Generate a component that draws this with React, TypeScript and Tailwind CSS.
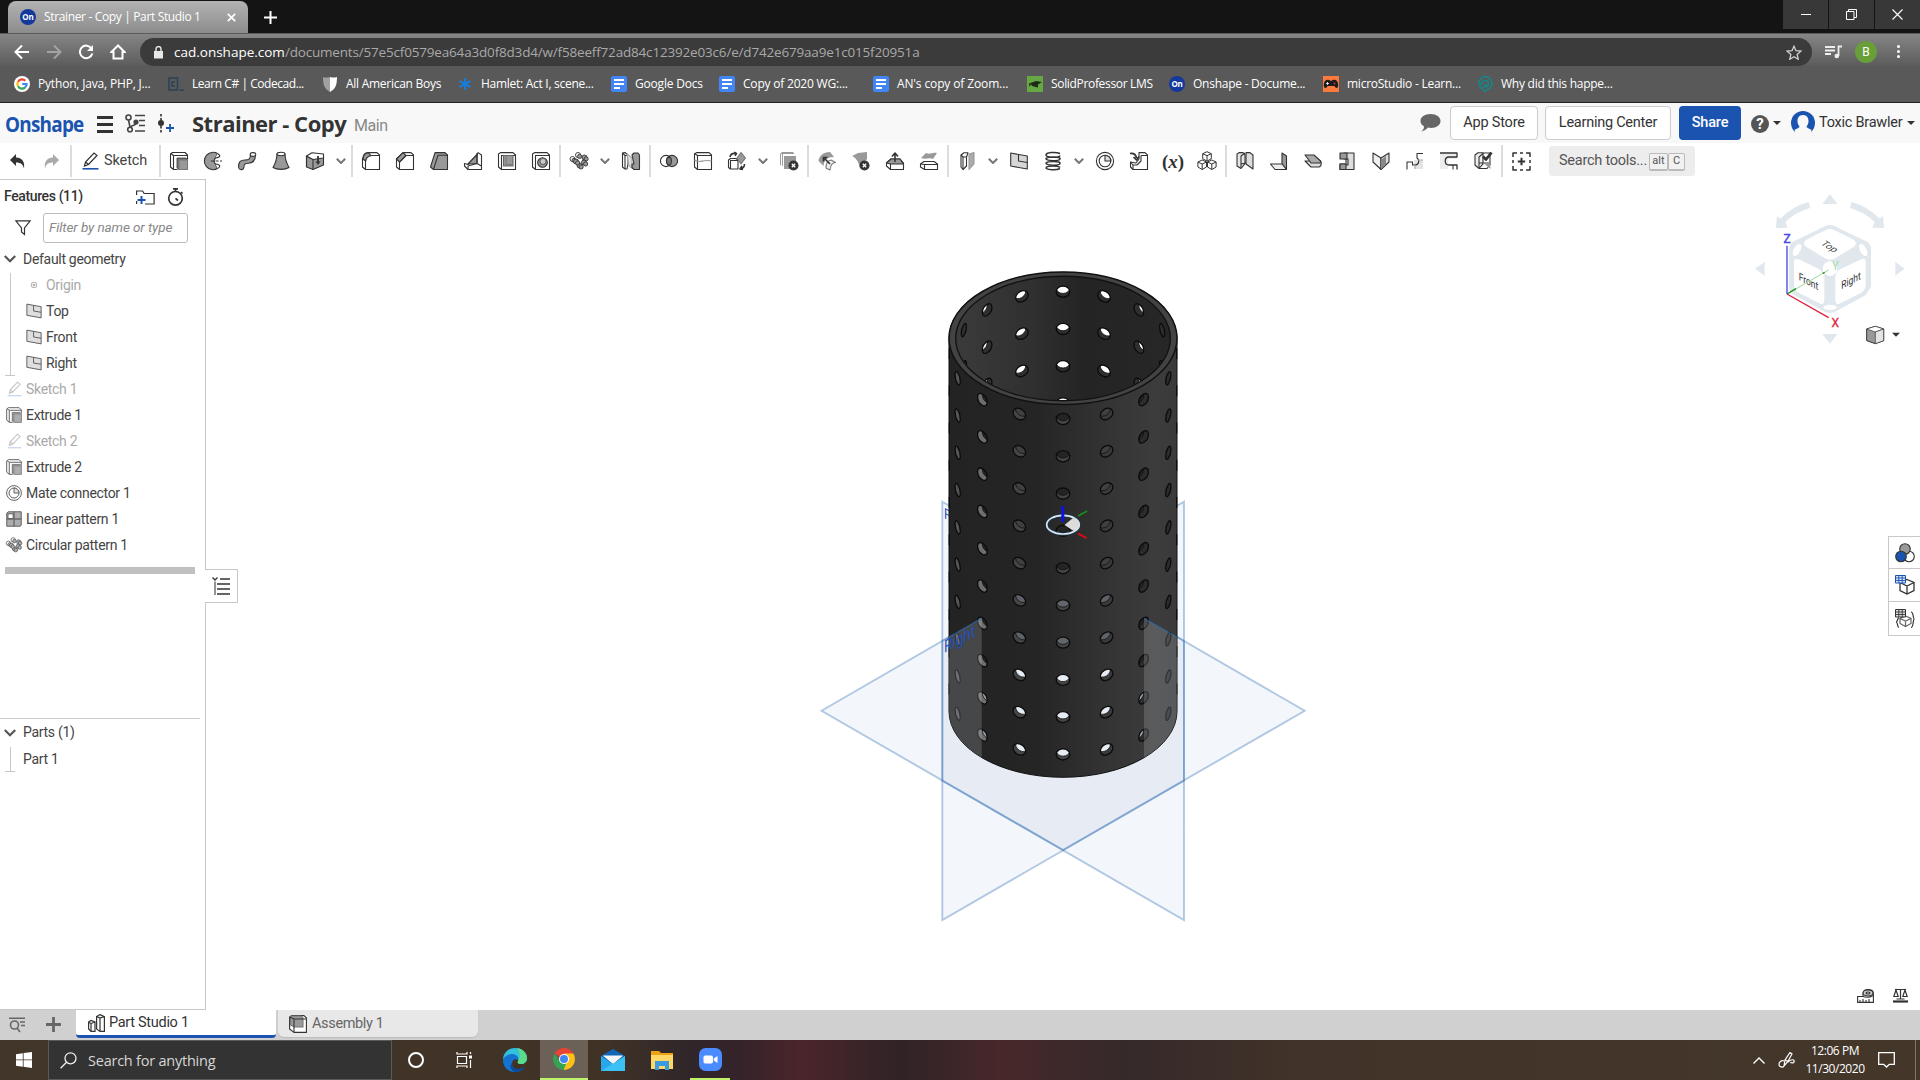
import React from "react";

type P = { children?: React.ReactNode; className?: string };

const K = "#333333";
const G = "#999999";
const L = "#dcdcdc";

/* ---------- small helpers ---------- */

function Icon({ children, size = 18, box = 18 }: { children: React.ReactNode; size?: number; box?: number }) {
  return (
    <svg width={size} height={size} viewBox={`0 0 ${box} ${box}`} fill="none" stroke={K} strokeWidth={1.1} strokeLinejoin="round" className="shrink-0 overflow-visible">
      {children}
    </svg>
  );
}

const Caret = ({ className = "" }: P) => (
  <svg width="8" height="4" viewBox="0 0 8 4" className={"shrink-0 " + className}>
    <path d="M0 0h8L4 4z" fill="#333" />
  </svg>
);

/* ---------- toolbar icons ---------- */

const ExtrudeI = () => (
  <Icon>
    <path d="M3.500 17.500.5 15V2L2.500.5H15L17.500 3v4M3.500 17.500V3.500H17.500M.8 1.500 3.500 3.500M3.500 17.500h4" fill="#fff" />
    <path d="M7 6h9l1.500 1.500v10H9L7 16z" fill="#777" strokeWidth=".8" />
    <path d="M9 8h8.500v9.500H9z" fill={G} stroke="#777" />
  </Icon>
);
const RevolveI = () => (
  <Icon>
    <path d="M13.500 1.500A8.700 8.700 0 1 0 13.500 16.500L11.500 12A4 4 0 0 1 11.500 6z" fill={G} />
    <path d="M13.500 1.500c3.500 2 3 4-2 4.500M13.500 16.500c3.500-2 3-4-2-4.500" fill="#fff" />
    <path d="M7 9h11" strokeDasharray="3 1.500" />
  </Icon>
);
const SweepI = () => (
  <Icon>
    <path d="M.6 15.500C.5 10 2 8 7 8c4 0 5.500-1 5.500-5.500h5c0 6-3 8.500-7 8.800-4 .2-4.500 1-4.700 4.500C5 18.500 1 18 .6 15.500z" fill={G} />
    <ellipse cx="15" cy="2.500" rx="2.800" ry="1.900" fill="#fff" />
  </Icon>
);
const LoftI = () => (
  <Icon>
    <path d="M5 2C5 8 3 12 1 15.500c4 2.500 12 2.500 16 0C15 12 13 8 13 2z" fill={G} />
    <ellipse cx="9" cy="2" rx="4" ry="1.700" fill="#fff" />
  </Icon>
);
const ThickenI = () => (
  <Icon>
    <path d="M.5 4 5 6.500 17.500 4v9L7 17.500.5 15z" fill={G} />
    <path d="M.5 4 6 .8 17.500 2v4L7 7.500z" fill="#fff" />
    <path d="M7 7v10.500M.5 4v11" />
    <path d="M12 4v7" strokeWidth="1.800" />
    <path d="M9.500 9.500h5L12 13z" fill={K} stroke="none" />
  </Icon>
);
const FilletI = () => (
  <Icon>
    <path d="M1 6C1 3 3 .6 6 .6h9L17.500 3v14.500H3.500L.5 15V6z" fill="#fff" />
    <path d="M3.500 17.500V10C3.500 6 6 3.500 10 3.500h7.500" />
    <path d="M1 7C1.500 3 3.500 1 6.500.8L9 3.500C6 4 4 6 3.500 9z" fill={G} />
  </Icon>
);
const ChamferI = () => (
  <Icon>
    <path d="M.5 7 7 .6h8L17.500 3v14.500H3.500L.5 15z" fill="#fff" />
    <path d="M3.500 17.500V10L10 3.500h7.500" />
    <path d="M.5 7 7 .6l3 2.900L3.500 10z" fill={G} />
  </Icon>
);
const DraftI = () => (
  <Icon>
    <path d="M.5 15 5 .6h10L17.500 3v14.500H3.500z" fill={G} />
    <path d="M3.500 17.500 8 3.200h9.500" />
  </Icon>
);
const RibI = () => (
  <Icon>
    <path d="M14 .6 17.500 3v14.500H4L.5 14V11.500L4 12.500 13 3z" fill="#fff" />
    <path d="M4 12 13 2.500v9z" fill={G} />
    <path d="M4 17.500V14l9-2.500 4.500 2.500M13 11.500V1" />
  </Icon>
);
const ShellI = () => (
  <Icon>
    <path d="M.5 2 2.500.6H15L17.500 3v14.500H3.500L.5 15z" fill="#fff" />
    <path d="M3.500 17.500V3.500h14" />
    <path d="M5.500 3.500H15V14H5.500z" fill={G} stroke="#666" />
    <path d="M8 3.500v9h7" stroke="#777" />
  </Icon>
);
const HoleI = () => (
  <Icon>
    <path d="M.5 2 2.500.6H15L17.500 3v14.500H3.500L.5 15z" fill="#fff" />
    <path d="M3.500 17.500V3.500h14" />
    <circle cx="10.500" cy="10.500" r="4.800" fill={G} />
    <circle cx="11" cy="9.500" r="3" fill="#ccc" stroke="#666" />
  </Icon>
);
const CircPatI = () => (
  <Icon>
    <g strokeWidth=".9">
      {[[2.500, 7], [8, 3], [14.500, 5.500], [14, 10.500], [9.500, 13.500], [6, 9.500]].map(([x, y], i) => (
        <g key={i}>
          <circle cx={x} cy={y} r="2.500" fill={i < 2 ? "#fff" : G} />
          <circle cx={x + 1.600} cy={y + 1.400} r="2.100" fill={G} />
        </g>
      ))}
    </g>
  </Icon>
);
const MirrorI = () => (
  <Icon>
    <path d="M.5 1 3 .5l3 2.500v9l-1 5H3L.5 15z" fill="#fff" />
    <path d="M3 17V3.500L.5 1M3 3.500h3" />
    <path d="M5 2l5 4v10l-3-2z" fill="#ddd" stroke="#aaa" />
    <path d="M10 3 12 1h4l1.500 2v14.500H12L10 15.500V12h2z" fill={G} />
  </Icon>
);
const BooleanI = () => (
  <Icon>
    <circle cx="6" cy="9" r="5.600" fill="#fff" />
    <circle cx="12" cy="9" r="5.600" fill={G} />
    <path d="M9 4.300a5.600 5.600 0 0 1 0 9.400 5.600 5.600 0 0 1 0-9.400z" fill="#777" />
  </Icon>
);
const SplitI = () => (
  <Icon>
    <path d="M.5 2 2.500.6H15L17.500 3v14.500H3.500L.5 15z" fill="#fff" />
    <path d="M3.500 17.500V3.500h14M.5 1.500l3 2" />
    <path d="M.5 8c5 4 8-1 17 1" stroke="#999" />
  </Icon>
);
const TransformI = () => (
  <Icon>
    <path d="M.5 8 2.500 6.500H8l2 1.500v9H2.500l-2-1.500z" fill="#fff" />
    <path d="M2.500 17V8.500H10" />
    <path d="M13 .5l4.500 5.500-4.500 6-4-6z" fill={G} stroke="#777" />
    <path d="M2 5C2.500 2 5 1 8 1.500M6 .3 8.500 1.500 7 3.800M16.500 12c0 3-1.500 4.500-4 5M14 14l-2 3 3 .5" strokeWidth="1.600" />
  </Icon>
);
const BadX = ({ x = 13.5, y = 13.5 }) => (
  <g>
    <circle cx={x} cy={y} r="4.500" fill={K} />
    <path d={`M${x - 1.7} ${y - 1.7}l3.400 3.400m0-3.400l-3.400 3.400`} stroke="#fff" strokeWidth="1.300" />
  </g>
);
const DeletePartI = () => (
  <Icon>
    <path d="M0 2 2 0h11l1.500 2H3v12l-3-1z" fill={G} stroke="none" />
    <path d="M4 4h12v13H4z" fill={G} stroke="none" />
    <path d="M1.500 14V2" stroke="#fff" />
    <BadX />
  </Icon>
);
const ModFilletI = () => (
  <Icon>
    <path d="M.5 9C1 4 5 0 12 0l4 5C9 5 6 8 5.500 14z" fill={G} stroke="none" />
    <path d="M8 16C8 11 10 8.500 13 8l4.500 2.500c-4 0-5 3-5.500 7.500z" fill="#eee" stroke="#777" />
    <path d="M12 12 6 6M5.500 9.500V5.500h4" strokeWidth="1.700" />
  </Icon>
);
const DelFaceI = () => (
  <Icon>
    <path d="M0 4 6 1l9-1v7l-7 8C6 9 4 6 0 4z" fill={G} stroke="none" />
    <BadX x={12.5} />
  </Icon>
);
const MoveFaceI = () => (
  <Icon>
    <path d="M.5 11 5 7h9l3.500 4v6.500H4.500L.5 14z" fill="#fff" />
    <path d="M.5 11 5 7h9l3.500 5h-13z" fill={G} />
    <path d="M4.500 17.500V12" />
    <path d="M9 10V2M6 4.500 9 1l3 3.500" strokeWidth="1.600" />
  </Icon>
);
const ReplaceFaceI = () => (
  <Icon>
    <path d="M1 6 6 1c4 2 6-1 11 0l-4 6C9 5 6 8 1 6z" fill={G} stroke="none" />
    <path d="M.5 12 4 9.500h10L17.500 12v5.500H4.500L.5 15z" fill="#fff" />
    <path d="M4.500 17.500V12.500h13M.5 12l4 .5" />
  </Icon>
);
const OffsetI = () => (
  <Icon>
    <path d="M3 3 6 .8h4L8.500 5v9L5 17.500 3 15z" fill="#fff" />
    <path d="M3 3l2 2v12.500M5 5h3.500" />
    <path d="M11 2l5-1.500V12l-5 5.500z" fill="#aaa" stroke="#999" />
  </Icon>
);
const PlaneI = ({ c = "#d6d6d6" }) => (
  <Icon>
    <path d="M.7 1 17.300 4v13L.7 14z" fill={c} />
    <path d="M8.500 2.500V9l8.800 1.500" />
  </Icon>
);
const HelixI = () => (
  <Icon>
    <path d="M16 1.500C11-.5 2 .5 2 3s13 3 14 .5M2 6.500c0 2.500 13 3 14 .5s-12-2.500-14-.5zM2 11c0 2.500 13 3 14 .5s-12-2.500-14-.5zM2 15.500c0 2.500 10 3 14 1M2 15.500c2-2 12-2 14 0" strokeWidth="1.500" />
  </Icon>
);
const MateI = () => (
  <Icon>
    <circle cx="9" cy="9" r="8.600" fill="#fff" />
    <circle cx="9" cy="9" r="5.800" />
    <path d="M9 3.200V9h5.800a5.800 5.800 0 0 0-5.800-5.800" fill="#ddd" />
  </Icon>
);
const DeriveI = () => (
  <Icon>
    <path d="M.5 10v5L3 17.500h14.500V3L15 .6H9V7l-3 4z" fill="#fff" />
    <path d="M11 3.500h6.500M11 3.500V9l-4 4H3v4.500M.5 10l2.500 3" />
    <path d="M0 1.500C4 1 6 3 6.500 6M3.500 5 6.500 8 9 4.500" strokeWidth="1.700" />
  </Icon>
);
const CubesI = () => (
  <Icon>
    {[[9, 4.5], [4.2, 12.8], [13.8, 12.8]].map(([x, y], i) => (
      <g key={i} strokeWidth="1">
        <path d={`M${x} ${y - 4.8}l4.300 2v5l-4.300 2.500-4.300-2.500V${y - 2.8}z`} fill="#fff" />
        <path d={`M${x - 4.3} ${y - 2.8}l4.300 2 4.300-2M${x} ${y - 0.8}v5.500`} />
      </g>
    ))}
  </Icon>
);
const SheetI = () => (
  <Icon>
    <path d="M1 2 3 .6h4l2 2v9l-4 4.900L1 14z" fill="#e5e5e5" />
    <path d="M10 .6h4l3 2.400v14L10 12z" fill={L} />
    <path d="M5 16V4l4-3M5 12l5-1" />
  </Icon>
);
const FlangeI = () => (
  <Icon>
    <path d="M12 1 16.500 4v13.500L12 12z" fill={G} />
    <path d="M.5 12H12l4.500 5.500H5z" fill="#eee" />
  </Icon>
);
const HemI = () => (
  <Icon>
    <path d="M1 9h6l8-1c3 1 3 6 0 7H7z" fill="#ddd" />
    <path d="M1 3h9l6.500 6c.5 2-.5 2-2 2H7z" fill="#aaa" />
  </Icon>
);
const TabI = () => (
  <Icon>
    <path d="M6 1h10v16.500H2V12h6V7H6z" fill="#ddd" />
    <path d="M2 1h7v6H2zM2 12h6v5.500H2z" fill={G} />
    <path d="M8 7h2v6H8" />
  </Icon>
);
const BendI = () => (
  <Icon>
    <path d="M1 1l8 5v11.500L1 10z" fill="#eee" />
    <path d="M17 1 9 6v11.500L17 10z" fill={L} />
    <path d="M9 17.500V8l5-4v8z" fill="#888" stroke="none" />
  </Icon>
);
const FormI = () => (
  <Icon>
    <path d="M8 8h9v9H8z" fill="#e4e4e4" stroke="none" />
    <path d="M1 17.500V10h5.500v3H9c4 0 5-5 2-7V1.500h6" />
    <path d="M9 13v4M12 8h5" stroke="#aaa" />
  </Icon>
);
const CornerI = () => (
  <Icon>
    <path d="M0 1h17v6H8v10H0z" fill="#ececec" stroke="none" />
    <path d="M0 1h17v4H9c-5 0-5 8 0 8h8v4.500" strokeWidth="1.300" />
    <path d="M13 13v4.500" />
  </Icon>
);
const FinishI = () => (
  <Icon>
    <path d="M1 3 4 .8h5v11L5 16.500 1 13z" fill="#eee" />
    <path d="M9 1h7v12l-3 3.500L5 16.500M5 16V5l4-3.500M5 11h10" />
    <path d="M9 11h6l2 6z" fill={G} stroke="none" />
    <path d="M9 4.500 12 7.500 17.500.5" strokeWidth="2.800" />
  </Icon>
);
const AddI = () => (
  <Icon size={19} box={19}>
    <path d="M1 5V1h4M8 1h3M14 1h4v4M18 8v3M18 14v4h-4M11 18H8M5 18H1v-4M1 11V8" strokeWidth="1.500" />
    <path d="M9.500 5.800v7.400M5.800 9.500h7.400" strokeWidth="2" />
  </Icon>
);
const PencilI = ({ faded = false }) => (
  <svg width="17" height="18" viewBox="0 0 17 18" fill="none" className="shrink-0 overflow-visible" stroke={faded ? "#b5b5b5" : K} strokeWidth="1.200">
    <path d="M2.500 14 3.500 10 12 1l3 2.500L6.500 12.500z M3.500 10l3 2.500" />
    <path d="M.5 16.800h16" stroke={faded ? "#c3d0ea" : "#1b54b0"} strokeWidth="1.600" />
  </svg>
);
const LinPatI = () => (
  <Icon>
    <path d="M.6 2 2.500.6H17.400V16l-1 1.400H.6z" fill={G} />
    <path d="M2 3h6v5.500H2z" fill="#fff" />
    <path d="M9 .6v17M.6 9h17" stroke="#444" strokeWidth="1.600" />
  </Icon>
);

/* ---------- browser chrome ---------- */

const DocsFav = () => (
  <div className="flex h-4 w-4 shrink-0 flex-col justify-center gap-[2px] rounded-[2px] bg-[#4285f4] pl-[3px]">
    <div className="h-[2px] w-[10px] bg-white" />
    <div className="h-[2px] w-[10px] bg-white" />
    <div className="h-[2px] w-[6px] bg-white" />
  </div>
);
const OnFav = () => (
  <div className="flex h-4 w-4 shrink-0 items-center justify-center rounded-full bg-[#12399b] font-['Open_Sans',sans-serif] text-[8px] font-bold leading-none text-white">On</div>
);
const GoogleFav = () => (
  <svg width="16" height="16" viewBox="0 0 16 16">
    <circle cx="8" cy="8" r="8" fill="#fff" />
    <g fill="none" strokeWidth="2.200">
      <path d="M11.300 4.800A4.600 4.600 0 0 0 4 5.700" stroke="#ea4335" />
      <path d="M4 5.700a4.600 4.600 0 0 0 0 4.600" stroke="#fbbc05" />
      <path d="M4 10.300a4.600 4.600 0 0 0 7.100 1.100" stroke="#34a853" />
      <path d="M11.100 11.400A4.600 4.600 0 0 0 12.600 8H8.200" stroke="#4285f4" />
    </g>
  </svg>
);
const CodeFav = () => (
  <svg width="16" height="16" viewBox="0 0 16 16" fill="none" stroke="#2a4256" strokeWidth="1.500">
    <path d="M1 2h8.500v12H1zM7 6H4v4h3M11.500 14.200H16" />
  </svg>
);
const ShieldFav = () => (
  <svg width="16" height="16" viewBox="0 0 16 16">
    <path d="M1 1c3 1 5 .5 7 0v15C3 13 1 10 1 1z" fill="#a0a0a0" />
    <path d="M15 1c-3 1-5 .5-7 0v15c5-3 7-6 7-15z" fill="#fff" />
  </svg>
);
const StarFav = () => (
  <svg width="16" height="16" viewBox="0 0 16 16" stroke="#1b7cd6" strokeWidth="2">
    <path d="M8 2v12M2.500 5l11 6M13.500 5l-11 6" />
  </svg>
);
const SpFav = () => (
  <svg width="16" height="16" viewBox="0 0 16 16">
    <path d="M0 0h16v16H0z" fill="#67a844" />
    <path d="M2 7.500 9 5l6 1-4 2.500v3L5 10 4 8 2.500 11z" fill="#1d2b17" />
  </svg>
);
const MicroFav = () => (
  <svg width="16" height="16" viewBox="0 0 16 16">
    <path d="M0 0h16v16H0z" fill="#fb7a3d" />
    <path d="M2 5c2-2 4-1 6 0 2-1 4-2 6 0 2 3 1 7 0 7-2 0-2-2-3-2H5c-1 0-1 2-3 2-1 0-2-4 0-7z" fill="#1c1c1c" />
    <path d="M3 7.500h3M4.500 6v3" stroke="#fff" strokeWidth=".8" />
    <circle cx="11.500" cy="7.500" r="1" fill="#b33" />
  </svg>
);
const SwirlFav = () => (
  <svg width="16" height="16" viewBox="0 0 16 16" fill="none" stroke="#15888a" strokeWidth="1.500">
    <path d="M8 15.500 5.500 13A6.500 6.500 0 1 1 10 13.500z" />
    <path d="M4 9c0-4 5-6 7-3s-3 5-4 2M6 10.500c3 1 5 0 6-2" />
  </svg>
);

const bookmarks: { icon: React.ReactNode; text: string; w: string; t: string }[] = [
  { icon: <GoogleFav />, text: "Python, Java, PHP, J...", w: "w-[154px]", t: "tracking-[-0.18px]" },
  { icon: <CodeFav />, text: "Learn C# | Codecad...", w: "w-[154px]", t: "tracking-[-0.45px]" },
  { icon: <ShieldFav />, text: "All American Boys", w: "w-[135px]", t: "tracking-[-0.27px]" },
  { icon: <StarFav />, text: "Hamlet: Act I, scene...", w: "w-[154px]", t: "tracking-[-0.28px]" },
  { icon: <DocsFav />, text: "Google Docs", w: "w-[108px]", t: "tracking-[-0.2px]" },
  { icon: <DocsFav />, text: "Copy of 2020 WG:...", w: "w-[154px]", t: "tracking-[-0.2px]" },
  { icon: <DocsFav />, text: "AN's copy of Zoom...", w: "w-[154px]", t: "tracking-[-0.13px]" },
  { icon: <SpFav />, text: "SolidProfessor LMS", w: "w-[142px]", t: "tracking-[-0.33px]" },
  { icon: <OnFav />, text: "Onshape - Docume...", w: "w-[154px]", t: "tracking-[-0.25px]" },
  { icon: <MicroFav />, text: "microStudio - Learn...", w: "w-[154px]", t: "tracking-[-0.25px]" },
  { icon: <SwirlFav />, text: "Why did this happe...", w: "w-[154px]", t: "tracking-[-0.25px]" },
];

function Browser() {
  return (
    <div className="font-['Open_Sans','Noto_Sans',sans-serif] text-white">
      <div className="flex h-[33px] bg-[#141414]">
        <div className="ml-2 mt-px flex h-8 w-[240px] items-center rounded-t-lg bg-gradient-to-b from-[#b3b3b3] to-[#8c8c8c] pl-3 pr-[9px]">
          <OnFav />
          <span className="ml-2 flex-1 whitespace-nowrap text-[12px] tracking-[-0.35px]">Strainer - Copy | Part Studio 1</span>
          <svg width="9" height="9" viewBox="0 0 9 9" stroke="#fff" strokeWidth="1.700" className="mr-[3px]"><path d="M.8.8l7.400 7.400M8.200.8L.8 8.200" /></svg>
        </div>
        <div className="ml-2 mt-[3px] flex h-7 w-7 items-center justify-center">
          <svg width="13" height="13" viewBox="0 0 13 13" stroke="#fff" strokeWidth="2"><path d="M6.500 0v13M0 6.500h13" /></svg>
        </div>
        <div className="ml-auto flex h-[29px] gap-px">
          <div className="flex w-[45px] items-center justify-center bg-[#383838]"><div className="h-px w-[10px] bg-white" /></div>
          <div className="flex w-[45px] items-center justify-center bg-[#383838]">
            <svg width="11" height="11" viewBox="0 0 11 11" fill="none" stroke="#fff"><path d="M.5 2.500h7.500v8H.5zM2.500 2.500v-2h8v8H8" /></svg>
          </div>
          <div className="flex w-[45px] items-center justify-center bg-[#383838]">
            <svg width="11" height="11" viewBox="0 0 11 11" stroke="#fff" strokeWidth="1.100"><path d="M.5.5l10 10M10.500.5l-10 10" /></svg>
          </div>
        </div>
      </div>
      <div className="flex h-[33px] items-center border-t border-[#5a5a5a] bg-gradient-to-b from-[#868686] to-[#5c5c5c]">
        <div className="flex w-[140px] items-center pl-[14px] pt-[3px]">
          <svg width="16" height="16" viewBox="0 0 16 16" fill="none" stroke="#fff" strokeWidth="2" className="mr-4"><path d="M15 8H2M8 1.500 1.500 8 8 14.500" /></svg>
          <svg width="16" height="16" viewBox="0 0 16 16" fill="none" stroke="#a3a3a3" strokeWidth="2" className="mr-4"><path d="M1 8h13M8 1.500 14.500 8 8 14.500" /></svg>
          <svg width="16" height="16" viewBox="0 0 16 16" fill="none" stroke="#fff" strokeWidth="2" className="mr-4"><path d="M13.500 4.500A6.300 6.300 0 1 0 14.300 9.500" /><path d="M15 1v6H9z" fill="#fff" stroke="none" /></svg>
          <svg width="16" height="16" viewBox="0 0 16 16" fill="none" stroke="#fff" strokeWidth="2"><path d="M8 1.500 1.500 8H3.500v6.500h9V8h2z" /></svg>
        </div>
        <div className="mt-[4px] flex h-7 w-[1672px] items-center rounded-full bg-[#3b3b3b] pl-[14px] pr-[10px]">
          <svg width="9" height="13" viewBox="0 0 9 13" fill="none" stroke="#e8e8e8"><path d="M0 5h9v7.500H0z" fill="#e8e8e8" stroke="none" /><path d="M2 5V3a2.500 2.500 0 0 1 5 0v2" strokeWidth="1.400" /></svg>
          <span className="ml-[11px] flex-1 whitespace-nowrap text-[13.500px] tracking-[-0.18px] text-[#a9a9a9]">
            <span className="tracking-[0px] text-white">cad.onshape.com</span>/documents/57e5cf0579ea64a3d0f8d3d4/w/f58eeff72ad84c12392e03c6/e/d742e679aa9e1c015f20951a
          </span>
          <svg width="16" height="15" viewBox="0 0 24 23" fill="none" stroke="#d0d0d0" strokeWidth="2"><path d="M12 1.800l3 7 7.500.6-5.700 5 1.700 7.400L12 17.900l-6.500 3.900 1.700-7.400-5.700-5 7.500-.6z" /></svg>
        </div>
        <div className="flex flex-1 items-center pl-[13px] pt-[3px]">
          <svg width="17" height="14" viewBox="0 0 17 14" fill="none" stroke="#eee" strokeWidth="1.800"><path d="M0 2h10M0 5.500h10M0 9h6M13.500 11V1.500H17" /><circle cx="11.800" cy="11" r="2.300" fill="#eee" stroke="none" /></svg>
          <div className="ml-[13px] flex h-[22px] w-[22px] items-center justify-center rounded-full bg-[#689f38] font-['Roboto',sans-serif] text-[12px]">B</div>
          <div className="ml-[20px] flex flex-col gap-[2px]"><i className="h-[3px] w-[3px] rounded-full bg-white" /><i className="h-[3px] w-[3px] rounded-full bg-white" /><i className="h-[3px] w-[3px] rounded-full bg-white" /></div>
        </div>
      </div>
      <div className="flex h-[37px] items-center border-b border-[#222] bg-[#595959] pl-[14px]">
        {bookmarks.map((b, i) => (
          <div key={i} className={"flex shrink-0 items-center gap-2 whitespace-nowrap text-[12px] " + b.w + " " + b.t}>
            {b.icon}
            <span>{b.text}</span>
          </div>
        ))}
      </div>
    </div>
  );
}

/* ---------- application header ---------- */

function Header() {
  return (
    <div className="flex h-10 items-center bg-[#f8f8f8]">
      <div className="w-[90px] pl-[5px]">
        <span className="block origin-left scale-x-[0.86] whitespace-nowrap font-['Open_Sans',sans-serif] text-[22px] font-bold leading-none tracking-[-0.9px] text-[#1b54b0]">Onshape</span>
      </div>
      <div className="ml-[7px] mt-[2px] flex w-4 flex-col gap-[4px]"><i className="h-[3px] bg-[#333]" /><i className="h-[3px] bg-[#333]" /><i className="h-[3px] bg-[#333]" /></div>
      <svg width="21" height="19" viewBox="0 0 21 19" fill="none" stroke="#444" strokeWidth="1.600" className="ml-3">
        <circle cx="3.500" cy="3.500" r="2.500" /><circle cx="11" cy="8" r="1.800" fill="#444" /><circle cx="5" cy="15.500" r="2.300" />
        <path d="M3.500 6 5 13M11 9.500c0 2-4 1.500-5.500 3.500M10 1.500h10M14 6.500h6M14 11.500h6M10 17h10" />
      </svg>
      <svg width="18" height="19" viewBox="0 0 18 19" fill="none" className="ml-3">
        <path d="M3 0v19" stroke="#333" strokeWidth="1.600" strokeDasharray="2.500 1.500" /><circle cx="3" cy="9" r="3" fill="#333" /><path d="M12 10v8M8 14h8" stroke="#1b54b0" strokeWidth="1.800" />
      </svg>
      <span className="ml-[16px] w-[162px] whitespace-nowrap font-['Open_Sans',sans-serif] text-[22px] font-bold tracking-[-0.5px] text-[#333]">Strainer - Copy</span>
      <span className="mt-[6px] text-[16px] tracking-[-0.4px] text-[#888]">Main</span>
      <svg width="21" height="18" viewBox="0 0 21 18" className="ml-auto mr-[9px] shrink-0"><path d="M10.500 0c6 0 10 3 10 7s-4 7-9.500 7c-1 0-2-.1-3-.4C6.500 15.500 4 17 1.500 17.500 3 16 4 14.500 4 12.500 2 11 .5 9.500.5 7c0-4 4-7 10-7z" fill="#666" /></svg>
      <div className="flex h-[34px] w-[88px] items-center justify-center rounded border border-[#ccc] bg-white text-[14.500px] tracking-[-0.2px] text-[#333]">App Store</div>
      <div className="ml-[7px] flex h-[34px] w-[126px] items-center justify-center rounded border border-[#ccc] bg-white text-[14.500px] tracking-[-0.25px] text-[#333]">Learning Center</div>
      <div className="ml-2 flex h-[34px] w-[62px] items-center justify-center rounded bg-[#1b54b0] text-[14.500px] font-medium tracking-[-0.2px] text-white">Share</div>
      <div className="ml-[10px] mt-[2px] flex h-[18px] w-[18px] items-center justify-center rounded-full bg-[#555] text-[15px] font-bold text-white">?</div>
      <Caret className="ml-[4px]" />
      <svg width="24" height="24" viewBox="0 0 24 24" className="ml-[10px] shrink-0">
        <circle cx="12" cy="12" r="12" fill="#1b54b0" />
        <path d="M12 4c4 0 5.500 3 5.500 6s-1 4-2 5.500c0 1.500 3 2 5 3.500-1 5-3 7-8.500 7s-7.500-2-8.500-7c2-1.500 5-2 5-3.500C7.500 14 6.500 13 6.500 10S8 4 12 4z" fill="#f8f8f8" />
      </svg>
      <span className="ml-[4px] w-[88px] whitespace-nowrap text-[14.500px] tracking-[-0.25px] text-[#333]">Toxic Brawler</span>
      <Caret className="mr-[5px]" />
    </div>
  );
}

/* ---------- toolbar ---------- */

const Cell = ({ children }: P) => <div className="flex w-[34px] shrink-0 items-center justify-center">{children}</div>;
const Sep = () => <div className="flex w-1 shrink-0 justify-center"><div className="h-8 w-[2px] bg-[#dcdcdc]" /></div>;
const Chev = () => (
  <div className="flex w-[18px] shrink-0 items-center justify-center">
    <svg width="10" height="6" viewBox="0 0 10 6" fill="none" stroke="#777" strokeWidth="2"><path d="M.8.7 5 5 9.200.7" /></svg>
  </div>
);

function Toolbar() {
  return (
    <div className="flex h-9 items-center bg-white">
      <Cell><svg width="15" height="15" viewBox="0 0 15 15"><path d="M6 0v3.500c6 0 9 4 8 11C13 10.500 11 8.500 6 8.500V12L0 6z" fill="#333" /></svg></Cell>
      <Cell><svg width="15" height="15" viewBox="0 0 15 15"><path d="M9 0v3.500c-6 0-9 4-8 11 1-4 3-6 8-6V12l6-6z" fill="#aaa" /></svg></Cell>
      <div className="w-px" /><Sep />
      <div className="flex w-[85px] items-center gap-[5px] pl-[9px]"><PencilI /><span className="whitespace-nowrap text-[14.500px] tracking-[-0.1px] text-[#444]">Sketch</span></div>
      <Sep />
      <Cell><ExtrudeI /></Cell><Cell><RevolveI /></Cell><Cell><SweepI /></Cell><Cell><LoftI /></Cell><Cell><ThickenI /></Cell><Chev /><Sep />
      <Cell><FilletI /></Cell><Cell><ChamferI /></Cell><Cell><DraftI /></Cell><Cell><RibI /></Cell><Cell><ShellI /></Cell><Cell><HoleI /></Cell><Sep />
      <Cell><CircPatI /></Cell><Chev /><Cell><MirrorI /></Cell><Sep />
      <Cell><BooleanI /></Cell><Cell><SplitI /></Cell><Cell><TransformI /></Cell><Chev /><Cell><DeletePartI /></Cell><Sep />
      <Cell><ModFilletI /></Cell><Cell><DelFaceI /></Cell><Cell><MoveFaceI /></Cell><Cell><ReplaceFaceI /></Cell><Sep />
      <Cell><OffsetI /></Cell><Chev /><Cell><PlaneI /></Cell><Cell><HelixI /></Cell><Chev /><Cell><MateI /></Cell><Cell><DeriveI /></Cell>
      <Cell><span className="whitespace-nowrap font-['Liberation_Serif',serif] text-[19px] font-bold leading-none text-[#333]">(<i>x</i>)</span></Cell>
      <Cell><CubesI /></Cell><Sep />
      <Cell><SheetI /></Cell><Cell><FlangeI /></Cell><Cell><HemI /></Cell><Cell><TabI /></Cell><Cell><BendI /></Cell><Cell><FormI /></Cell><Cell><CornerI /></Cell><Cell><FinishI /></Cell><Sep />
      <Cell><AddI /></Cell>
      <div className="ml-[11px] flex h-[30px] w-[146px] shrink-0 items-center rounded-[3px] bg-[#ededed] pl-[10px] text-[#555]">
        <span className="w-[90px] shrink-0 whitespace-nowrap text-[14.500px] tracking-[-0.25px]">Search tools...</span>
        <span className="mt-[2px] flex h-[18px] w-[19px] items-center justify-center rounded-[2px] border border-b-2 border-[#bbb] bg-[#f1f1f1] text-[11px]">alt</span>
        <span className="mt-[2px] flex h-[18px] w-[17px] items-center justify-center rounded-[2px] border border-b-2 border-[#bbb] bg-[#f1f1f1] text-[11px]">C</span>
      </div>
    </div>
  );
}

/* ---------- feature list ---------- */

const Row = ({ icon, label, faded }: { icon: React.ReactNode; label: string; faded?: boolean }) => (
  <div className="flex h-[26px] items-center gap-[4px]">
    <div className="flex h-4 w-4 items-center justify-center">
      <div className="scale-[0.86] opacity-80">{icon}</div>
    </div>
    <span className={faded ? "whitespace-nowrap text-[#aaa]" : "whitespace-nowrap text-[#444]"}>{label}</span>
  </div>
);

const TreeChev = () => (
  <svg width="12" height="8" viewBox="0 0 12 8" fill="none" stroke="#555" strokeWidth="2.200"><path d="M.8 1 6 6.200 11.200 1" /></svg>
);

function Sidebar() {
  return (
    <div className="flex w-[206px] shrink-0 flex-col border-b border-r border-t border-[#c8c8c8] bg-white text-[14px] tracking-[-0.3px]">
      <div className="flex h-8 items-center pl-1">
        <span className="w-[132px] font-medium tracking-[-0.38px] text-[#333]">Features (11)</span>
        <svg width="19" height="16" viewBox="0 0 19 16" fill="none" stroke="#333" strokeWidth="1.200" className="mt-[3px]"><path d="M.6 5V1h6l1.500 2.500h10V14H9M.6 11v3" /><path d="M5.500 6v8M1.500 10h8" stroke="#1b54b0" strokeWidth="2" /></svg>
        <svg width="17" height="18" viewBox="0 0 17 18" fill="none" stroke="#333" strokeWidth="1.700" className="ml-[12px] mt-[2px]"><circle cx="8.500" cy="10.300" r="6.800" /><path d="M8.500 3.500V1M6 .9h5M14 4l1.500 1.500M8.500 10.300 11 12.500" /></svg>
      </div>
      <div className="flex h-[31px] items-center pl-[15px]">
        <svg width="16" height="16" viewBox="0 0 16 16" fill="none" stroke="#333" strokeWidth="1.200"><path d="M.8.8h14.400L9.500 8v6.500L6.500 12V8z" /></svg>
        <div className="ml-[12px] flex h-[30px] w-[145px] items-center whitespace-nowrap rounded-[3px] border border-[#bbb] pl-[5px] text-[13.500px] italic tracking-[-0.1px] text-[#888]">Filter by name or type</div>
      </div>
      <div className="mt-[3px] flex h-[26px] items-center gap-[7px] pl-[4px] text-[#444]"><TreeChev />Default geometry</div>
      <div className="relative pl-[26px]">
        <div className="absolute bottom-[0px] left-[5px] h-[103px] w-[6px] border-b border-r border-[#c8c8c8]" />
        <div className="absolute bottom-[0px] left-[11px] h-px w-1 bg-[#c8c8c8]" />
        <Row faded label="Origin" icon={<svg width="8" height="8" viewBox="0 0 8 8" fill="none" stroke="#888"><circle cx="4" cy="4" r="3.300" /><circle cx="4" cy="4" r="1" fill="#888" /></svg>} />
        <Row label="Top" icon={<PlaneI />} />
        <Row label="Front" icon={<PlaneI />} />
        <Row label="Right" icon={<PlaneI />} />
      </div>
      <div className="pl-[6px]">
        <Row faded label="Sketch 1" icon={<PencilI faded />} />
        <Row label="Extrude 1" icon={<ExtrudeI />} />
        <Row faded label="Sketch 2" icon={<PencilI faded />} />
        <Row label="Extrude 2" icon={<ExtrudeI />} />
        <Row label="Mate connector 1" icon={<MateI />} />
        <Row label="Linear pattern 1" icon={<LinPatI />} />
        <Row label="Circular pattern 1" icon={<CircPatI />} />
      </div>
      <div className="ml-[5px] mt-[9px] h-[7px] w-[190px] bg-[#c0c0c0]" />
      <div className="mt-[144px] h-px w-[200px] bg-[#ccc]" />
      <div className="flex h-[27px] items-center gap-[7px] pl-[4px] text-[#444]"><TreeChev />Parts (1)</div>
      <div className="relative flex h-[26px] items-center pl-[23px] text-[#444]">
        Part 1
        <div className="absolute left-[5px] top-[1px] h-[25px] w-[6px] border-b border-r border-[#c8c8c8]" />
        <div className="absolute bottom-0 left-[11px] h-px w-1 bg-[#c8c8c8]" />
      </div>
    </div>
  );
}

/* ---------- model viewport ---------- */

const CX = 1063;
const PITCH = 37.27;
const STEP = Math.PI / 8;

/* A radial hole through the tube wall, projected isometrically. */
function Bore({ id, rad, s, top, depth, row, n }: { id: string; rad: number; s: 1 | -1; top: number; depth: number; row: number; n: number }) {
  const a = n * STEP;
  const x = CX + rad * Math.sin(a);
  const y = top + s * depth * Math.cos(a) + row * PITCH;
  const m = `matrix(${Math.cos(a)} ${-s * Math.sin(a) * 0.577} 0 .816 ${x} ${y})`;
  const dx = (s === 1 ? -1 : 1) * 6.6 * Math.sin(a);
  const dy = -3.8 * Math.cos(a);
  const m2 = `matrix(${Math.cos(a)} ${-s * Math.sin(a) * 0.577} 0 .816 ${x + dx} ${y + dy})`;
  const k = Math.abs(n);
  const outer = s === 1;
  let see = "#242424";
  if (outer) {
    if (row >= 7 && k <= 1) see = "#e6ecf4";
    else if (row >= 5 && k === 0) see = "#62666b";
    else if (row >= 5 && k === 1) see = "#5f6369";
    else if (row >= 8 && k === 2) see = "#9a9fa5";
    else if (k === 1) see = "#404040";
  } else see = "#ffffff";
  const wall = outer ? (n < 0 ? (k === 3 ? "#565656" : k === 2 ? "#6e6e6e" : "#454545") : n === 0 ? "#454545" : k >= 2 ? "#2c2c2c" : "#3a3a3a") : "#2f2f2f";
  return (
    <g>
      <clipPath id={id}><circle r="6.800" transform={m} /></clipPath>
      <circle r="6.800" transform={m} fill={wall} />
      <g clipPath={`url(#${id})`}>
        <circle r="6.800" transform={m2} fill={see} stroke="#111" strokeWidth=".8" vectorEffect="non-scaling-stroke" />
      </g>
      <circle r="6.800" transform={m} fill="none" stroke="#0b0b0b" strokeWidth="1.300" vectorEffect="non-scaling-stroke" />
    </g>
  );
}

const cols = [-3, -2, -1, 0, 1, 2, 3];
const rows = [0, 1, 2, 3, 4, 5, 6, 7, 8, 9];
const BODY = "M949 338.300V711.300A114 66 0 0 0 1177 711.300V338.300A114 66 0 0 0 949 338.300z";

function Model() {
  return (
    <svg className="absolute inset-0" width="1714" height="831" viewBox="206 179 1714 831">
      <defs>
        <linearGradient id="outer" gradientUnits="userSpaceOnUse" x1="949" y1="0" x2="1177" y2="0">
          <stop offset="0" stopColor="#232323" /><stop offset=".38" stopColor="#252525" /><stop offset=".55" stopColor="#2d2d2d" /><stop offset=".75" stopColor="#363636" /><stop offset=".9" stopColor="#3c3c3c" /><stop offset="1" stopColor="#3a3a3a" />
        </linearGradient>
        <linearGradient id="inner" gradientUnits="userSpaceOnUse" x1="955" y1="0" x2="1170" y2="0">
          <stop offset="0" stopColor="#3b3b3b" /><stop offset=".35" stopColor="#303030" /><stop offset=".6" stopColor="#242424" /><stop offset="1" stopColor="#272727" />
        </linearGradient>
        <clipPath id="mouth"><ellipse cx={CX} cy="338.500" rx="107.300" ry="62.200" /></clipPath>
        <clipPath id="body"><path d={BODY} /></clipPath>
      </defs>
      <g fill="#f3f7fb">
        <path d="M821.500 710.800 1063 571 1304.700 710.800 1063 850z" />
        <path d="M942.300 501.700 1184 641V920L942.300 780.700z" />
        <path d="M1184 501.700 942.300 641V920L1184 780.700z" />
      </g>
      <path d="M942.300 641H1184V780.700L1063 850 942.300 780.700z" fill="#e6ebf4" />
      <g fill="none" stroke="#2f6db5" strokeOpacity=".36" strokeWidth="1.900">
        <path d="M821.500 710.800 1063 571 1304.700 710.800 1063 850z" />
        <path d="M942.300 501.700 1184 641V920L942.300 780.700z" />
        <path d="M1184 501.700 942.300 641V920L1184 780.700z" />
      </g>
      <text transform="matrix(.8 .46 0 1 944 518)" fontSize="15" fill="#2450b8" className="font-['Roboto',sans-serif]">Front</text>

      <path d={BODY} fill="url(#outer)" stroke="#111" strokeWidth="1" />
      {rows.map((r) => cols.map((n) => <Bore key={`${r}${n}`} id={`o${r}_${n + 3}`} rad={114} s={1} top={353} depth={66} row={r} n={n} />))}
      {rows.map((r) => (
        <path key={r} d={`M949.300 ${348 + r * PITCH}v11M1176.700 ${348 + r * PITCH}v11`} stroke="#0a0a0a" strokeWidth="1.200" />
      ))}
      <g clipPath="url(#body)">
        <path d="M942 641 981.700 618.300V800H942z" fill="#ccd6e0" fillOpacity=".2" />
        <path d="M1184 641 1144 618.300V800H1184z" fill="#ccd6e0" fillOpacity=".2" />
        <path d="M942.300 641 981.700 618.300M1144 618.300 1184 641" stroke="#2f6db5" strokeOpacity=".6" strokeWidth="1.500" />
      </g>
      <text transform="matrix(.8 -.43 0 1 944 653)" fontSize="17" fill="#2450b8" className="font-['Roboto',sans-serif]">Right</text>

      <ellipse cx={CX} cy="338.300" rx="114" ry="66.200" fill="#434343" stroke="#121212" strokeWidth="1.500" />
      <ellipse cx={CX} cy="338.500" rx="107.300" ry="62.200" fill="url(#inner)" />
      <g clipPath="url(#mouth)">
        {[0, 1, 2, 3].map((r) => cols.map((n) => <Bore key={`${r}${n}`} id={`i${r}_${n + 3}`} rad={107.3} s={-1} top={353.9} depth={62.2} row={r} n={n} />))}
      </g>
      <ellipse cx={CX} cy="338.500" rx="107.300" ry="62.200" fill="none" stroke="#121212" strokeWidth="1.400" />

      <g fill="none">
        <ellipse cx={CX} cy="524.700" rx="16.300" ry="9.300" stroke="#16364f" strokeWidth="3.200" />
        <ellipse cx={CX} cy="524.700" rx="16.300" ry="9.300" stroke="#dde6ee" strokeWidth="1.700" />
        <path d="M1064.500 525 1073 518a15 8.500 0 0 1 1.500 13.500z" fill="#dcdcdc" />
        <path d="M1062.800 506v16" stroke="#1010e0" strokeWidth="3" />
        <path d="M1078 516l9-5" stroke="#188a18" strokeWidth="2" />
        <path d="M1078 533.500l8.500 4.700" stroke="#d00d1c" strokeWidth="2" />
      </g>
    </svg>
  );
}

function ViewCube() {
  return (
    <svg className="absolute right-0 top-px" width="200" height="180" viewBox="0 0 600 540">
      <g fill="#e0e7ed">
        <path d="M330 43 307 72h45zM330 491l-23-29h45zM105 266l29-21v42zM554 266l-28-21v42z" />
        <path d="M266 66 270 84Q225 97 196 126L203 143 168 144 171 108 181 116Q215 80 266 66zM394 66 390 84Q435 97 464 126L457 143 492 144 489 108 479 116Q445 80 394 66z" />
        <path d="M318 137Q330 133 342 137L440 185Q453 192 453 207V320L437 345 343 397Q330 402 317 397L222 345Q207 337 207 322V207Q207 192 220 185z" />
      </g>
      <g fill="#fff">
        <path d="M315 149Q330 143 345 149L402 180Q414 190 402 200L345 235Q330 243 315 235L258 200Q246 190 258 180z" />
        <path d="M222 245Q223 232 236 238L298 268Q313 277 313 292V360Q312 378 298 370L236 338Q222 330 222 315z" />
        <path d="M437 245Q436 232 424 238L360 268Q346 277 346 292V360Q347 378 361 370L424 338Q437 330 437 315z" />
        <ellipse cx="231" cy="210" rx="10" ry="20" transform="rotate(28 231 210)" />
        <ellipse cx="430" cy="210" rx="10" ry="20" transform="rotate(-28 430 210)" />
        <ellipse cx="330" cy="382" rx="20" ry="8" />
        <circle cx="330" cy="266" r="22" />
      </g>
      <path d="M214 200Q216 192 228 186L325 142M335 142 432 186Q446 192 447 206V318" fill="none" stroke="#e0e7ed" strokeWidth="9" />
      <g className="font-['Roboto',sans-serif]" fontSize="31" fill="#333">
        <text transform="matrix(.8 .5 -.8 .5 300 192)" fontSize="31">Top</text>
        <text transform="matrix(.82 .43 0 1.050 236 300)">Front</text>
        <text transform="matrix(.82 -.43 0 1.050 364 328)">Right</text>
      </g>
      <g fill="none" strokeWidth="4">
        <path d="M201 342 326 270" stroke="#9ad69a" strokeWidth="3" />
        <path d="M201 342 228 326M308 280l6-3" stroke="#1a941a" />
        <path d="M201 197v145" stroke="#4646e6" />
        <path d="M201 342l125 71" stroke="#e01f3d" />
      </g>
      <g className="font-['Roboto',sans-serif]" fontSize="36" textAnchor="middle">
        <text x="201" y="188" fill="#4646e6" stroke="#4646e6">Z</text>
        <text x="346" y="440" fill="#e01f3d" stroke="#e01f3d">X</text>
        <text x="346" y="269" fill="#a9dcae">Y</text>
      </g>
      <g stroke="#333" strokeWidth="3" strokeLinejoin="round">
        <path d="M440 447 466 439 491 447V482L466 491 440 482z" fill="#999" />
        <path d="M440 447 466 439 491 447 466 456z" fill="#fff" strokeWidth="2" />
        <path d="M466 456 491 447V482L466 491z" fill="#e4e4e4" strokeWidth="2" />
      </g>
      <path d="M516 458h24l-12 12z" fill="#333" />
    </svg>
  );
}

function SidePanelTabs() {
  return (
    <div className="absolute right-0 top-[357px] flex w-8 flex-col divide-y divide-[#c8c8c8] border border-r-0 border-[#c8c8c8] bg-white">
      <div className="flex h-8 items-center justify-center">
        <svg width="20" height="20" viewBox="0 0 20 20" stroke="#333" strokeWidth="1.100"><circle cx="14" cy="13.500" r="5.300" fill="#fff" /><circle cx="10" cy="6" r="5.300" fill="#999" /><circle cx="6" cy="13.500" r="5.300" fill="#1b54b0" /></svg>
      </div>
      <div className="flex h-[33px] items-center justify-center">
        <svg width="20" height="20" viewBox="0 0 20 20" fill="none" stroke="#333" strokeWidth="1.300"><path d="M12 4.500 19 7.500v8L12 19l-7-3.500v-8zM5 7.500l7 3.500 7-3.500M12 11v8" fill="#fff" /><path d="M.5.5h10v7.500H.5z" fill="#d5e6fb" stroke="#1b54b0" strokeWidth="1" /><path d="M.5 3h10M.5 5.500h10M3.800.5v7.500M7.200.5v7.500" stroke="#1b54b0" strokeWidth=".9" /></svg>
      </div>
      <div className="flex h-[33px] items-center justify-center">
        <svg width="20" height="20" viewBox="0 0 20 20" fill="none" stroke="#333" strokeWidth="1.200"><path d="M10.500 7 16 9.500v5L10.500 17.500 5 14.500v-5zM5 9.500l5.500 2.500L16 9.500M10.500 12v5" stroke="#666" /><path d="M4 9c-2 0-1 4-3 4 2 0 1 5 3 5.500M16 3c3 0 1.500 7 3.500 7-2 0-.5 8-3.500 8.500" /><path d="M.5.5h10v7.500H.5z" fill="#ddd" strokeWidth="1" /><path d="M.5 3h10M.5 5.500h10M3.800.5v7.500M7.200.5v7.500" strokeWidth=".9" /></svg>
      </div>
    </div>
  );
}

function Viewport() {
  return (
    <div className="relative flex-1 bg-white">
      <Model />
      <ViewCube />
      <SidePanelTabs />
      <div className="absolute left-[-1px] top-[390px] flex h-[34px] w-[33px] items-center justify-center border border-l-0 border-[#c8c8c8] bg-white">
        <svg width="18" height="18" viewBox="0 0 18 18" fill="none" stroke="#333" strokeWidth="1.300"><path d="M8 2h10M5 7h13M5 12h13M5 17h13M.5.5 3 3 5.500.5" /><path d="M3 4.500V18" stroke="#888" strokeWidth="1.800" /></svg>
      </div>
      <div className="absolute bottom-[7px] right-[12px] flex items-center gap-[19px]">
        <svg width="17" height="14" viewBox="0 0 17 14" fill="none" stroke="#333" strokeWidth="1.100"><path d="M.6 7.500H6V5C6 2 8 .6 11 .6S16.400 2 16.400 4.500v8.900H.6z" fill="#fff" /><ellipse cx="11" cy="4" rx="5" ry="3" fill="#ccc" /><ellipse cx="11" cy="4" rx="2" ry="1" fill="#fff" /><path d="M3 13v-2M6 13v-3M9 13v-2M12 13v-3M6 7.500c3 1 7 1 10-1" /></svg>
        <svg width="15" height="15" viewBox="0 0 15 15" fill="none" stroke="#333" strokeWidth="1.200"><path d="M2 1.500h11M7.500 1.500V11M3 2 .8 8.500h4.400zM12 2 9.800 8.500h4.400zM3.500 11h8" /><path d="M0 13.500h15" strokeWidth="2.200" /></svg>
      </div>
    </div>
  );
}

/* ---------- bottom bars ---------- */

function StudioTabs() {
  return (
    <div className="flex h-[30px] bg-[#d0d0d0] text-[14.500px]">
      <div className="flex w-[76px] items-center pb-[1px] pl-[9px]">
        <svg width="17" height="16" viewBox="0 0 17 16" fill="none" stroke="#666" strokeWidth="1.600"><path d="M0 1.200h16M11 5h5M12 8.500h4" /><circle cx="5.500" cy="8" r="4" /><path d="M8 11l3 4" /></svg>
        <svg width="15" height="15" viewBox="0 0 15 15" stroke="#666" strokeWidth="2.800" className="ml-[20px]"><path d="M7.500 0v15M0 7.500h15" /></svg>
      </div>
      <div className="flex h-7 w-[200px] items-center rounded-b border-b-[3px] border-[#1b54b0] bg-white pl-[12px] pt-px text-[#333]">
        <svg width="17" height="18" viewBox="0 0 17 18" fill="#fff" stroke="#333" strokeWidth="1.200"><path d="M.6 8 3 6.500 7 8v9.400H3L.6 15zM.6 8 3 9.500v8M3 9.500 7 8" /><path d="M8.600 2.500 12 .6l4.400 2v14.800H12L8.600 15zM8.600 2.500 12 4v13.400M12 4l4.400-1.400" /></svg>
        <span className="ml-[4px] whitespace-nowrap tracking-[-0.3px]">Part Studio 1</span>
      </div>
      <div className="ml-[2px] flex h-[27px] w-[200px] items-center rounded-b-md bg-[#e8e8e8] pl-[11px] text-[#666] shadow-[0_1px_1px_#bbb]">
        <Icon><path d="M.6 2 3 .6h12L17.400 3v14.400H5L.6 14z" fill="#fff" /><path d="M1.500 1.500 3 1h9l2 2v9H5.500L1.500 10z" fill="#999" stroke="#777" /><path d="M5 17.400V4h12.400M.6 2 5 4" /></Icon>
        <span className="ml-[5px] whitespace-nowrap tracking-[-0.35px]">Assembly 1</span>
      </div>
    </div>
  );
}

function Taskbar() {
  return (
    <div className="flex h-10 items-stretch bg-[linear-gradient(90deg,#42352a_0px,#403326_600px,#30262a_690px,#35232a_740px,#4b252b_800px,#2f2326_900px,#48282a_1000px,#35292a_1120px,#413329_1300px,#44372a_1920px)] font-['Open_Sans',sans-serif] text-white">
      <div className="flex w-12 items-center justify-center">
        <svg width="16" height="16" viewBox="0 0 16 16" fill="#fff"><path d="M0 2.200 6.800 1.200v6.300H0zM7.600 1.100 16 0v7.500H7.600zM0 8.300h6.800v6.400L0 13.800zM7.600 8.300H16V16l-8.400-1.200z" /></svg>
      </div>
      <div className="flex w-[344px] items-center border border-[#5a5a5a] bg-[#333] pl-[11px] pt-px">
        <svg width="17" height="17" viewBox="0 0 17 17" fill="none" stroke="#eee" strokeWidth="1.300"><circle cx="10.500" cy="6.300" r="5.500" /><path d="M6.500 10.300.6 16.300" /></svg>
        <span className="ml-[11px] whitespace-nowrap text-[14.500px] tracking-[-0.23px] text-[#d6d6d6]">Search for anything</span>
      </div>
      <div className="flex w-12 items-center justify-center"><div className="h-4 w-4 rounded-full border-2 border-white" /></div>
      <div className="flex w-12 items-center justify-center">
        <svg width="17" height="16" viewBox="0 0 17 16" fill="none" stroke="#fff" strokeWidth="1.200"><path d="M1.500 4.500h9v7h-9zM1 0v2h10V0M1 16v-2h10v2M14.500 0v2M14.500 8v8" /><path d="M13 3.500h3v3h-3z" fill="#fff" stroke="none" /></svg>
      </div>
      <div className="flex w-[52px] items-center justify-center pl-[2px]">
        <svg width="24" height="24" viewBox="0 0 24 24">
          <path d="M0 12C0 5 5 0 12 0s12 5 12 10c0 4-3 6-6 6s-4-1-3-3c1-3-1-6-5-6-5 0-9 3-10 5z" fill="#33c0dd" />
          <path d="M14 0c6 1 10 5 10 10 0 4-3 6-6 6s-4-1-3-3c3-4 2-9-1-13z" fill="#5bdc8b" />
          <path d="M0 12c1-4 5-6 9-6 4 0 7 3 6 6-3-2-6 0-6 4 0 5 6 7 12 4-3 3-6 4-9 4C5 24 0 19 0 12z" fill="#1373cf" />
          <path d="M9 15c-1 5 5 8 13 4-2 3-6 5-10 5-4-1-6-6-3-9z" fill="#0b4a9c" />
        </svg>
      </div>
      <div className="flex w-12 items-center justify-center border-b-2 border-[#bdf46b] bg-[#6b6156]">
        <svg width="22" height="22" viewBox="0 0 22 22">
          <path d="M11 11 1.500 5.500A11 11 0 0 1 20.500 5.500z" fill="#e94335" />
          <path d="M11 11V22A11 11 0 0 0 20.500 5.500H11z" fill="#fbc116" />
          <path d="M1.500 5.500 6.700 13.500 11 22A11 11 0 0 1 1.500 5.500z" fill="#34a352" />
          <path d="M6.500 13.500 11 11l4 3-4 8z" fill="#fbc116" /><path d="M6.500 13.500 13 16l-2.500 6L6 20z" fill="#34a352" />
          <circle cx="11" cy="11" r="5" fill="#fff" /><circle cx="11" cy="11" r="4" fill="#4285f4" />
        </svg>
      </div>
      <div className="flex w-[50px] items-center justify-center">
        <svg width="24" height="22" viewBox="0 0 24 22"><path d="M0 7 12 0l12 7v15H0z" fill="#1066b8" /><path d="M2 6.500h20L12 15z" fill="#f4f4f4" /><path d="M0 7l12 8 12-8v15H0z" fill="#28a8ea" /><path d="M24 7 0 22h24z" fill="#50d9ff" opacity=".5" /><path d="M2.500 7h19L12 14.500z" fill="#f4f4f4" /></svg>
      </div>
      <div className="flex w-12 items-center justify-center">
        <svg width="23" height="19" viewBox="0 0 23 19"><path d="M0 0h8l2 2h12v16H0z" fill="#e8a412" /><path d="M0 4h22v14H0z" fill="#ffd766" /><path d="M4 19v-9h14v9h-4v-4H8v4z" fill="#3a9be0" /></svg>
      </div>
      <div className="ml-[4px] flex w-10 items-center justify-center border-b-2 border-[#bdf46b]">
        <svg width="23" height="23" viewBox="0 0 23 23"><rect width="23" height="23" rx="6.500" fill="#4a8cff" /><rect x="4.500" y="7.500" width="9.500" height="8" rx="1.800" fill="#fff" /><path d="M14.800 10.500 18.500 8v7l-3.700-2.500z" fill="#fff" /></svg>
      </div>
      <div className="ml-auto flex items-center">
        <svg width="12" height="7" viewBox="0 0 12 7" fill="none" stroke="#fff" strokeWidth="1.400"><path d="M.5 6.500 6 1l5.500 5.500" /></svg>
        <svg width="17" height="17" viewBox="0 0 17 17" fill="none" stroke="#fff" strokeWidth="1.200" className="ml-[13px]"><path d="M6 14 7 8l5-7.500 2 1.500-4.500 8zM7.500 8l3 2M6 9C3 8 1 10 1 12.500S5 16 6 14M10 10c3-3 7-3 6 0-.5 1.500-3 1-3.500 0" /></svg>
        <div className="ml-[8px] flex w-[64px] flex-col items-center whitespace-nowrap text-[12px] leading-[18px] tracking-[-0.45px]"><span>12:06 PM</span><span>11/30/2020</span></div>
        <svg width="17" height="16" viewBox="0 0 17 16" fill="none" stroke="#fff" strokeWidth="1.300" className="ml-[11px]"><path d="M.7.7h15.600v11.600h-5L8.500 15l-2.800-2.700h-5z" /></svg>
        <div className="ml-[20px] mr-1 h-10 w-px bg-[#7d756b]" />
      </div>
    </div>
  );
}

export default function App() {
  return (
    <div className="flex h-[1080px] w-[1920px] flex-col overflow-hidden bg-white font-['Roboto',sans-serif]">
      <Browser />
      <Header />
      <Toolbar />
      <div className="flex h-[831px] flex-none">
        <Sidebar />
        <Viewport />
      </div>
      <StudioTabs />
      <Taskbar />
    </div>
  );
}
